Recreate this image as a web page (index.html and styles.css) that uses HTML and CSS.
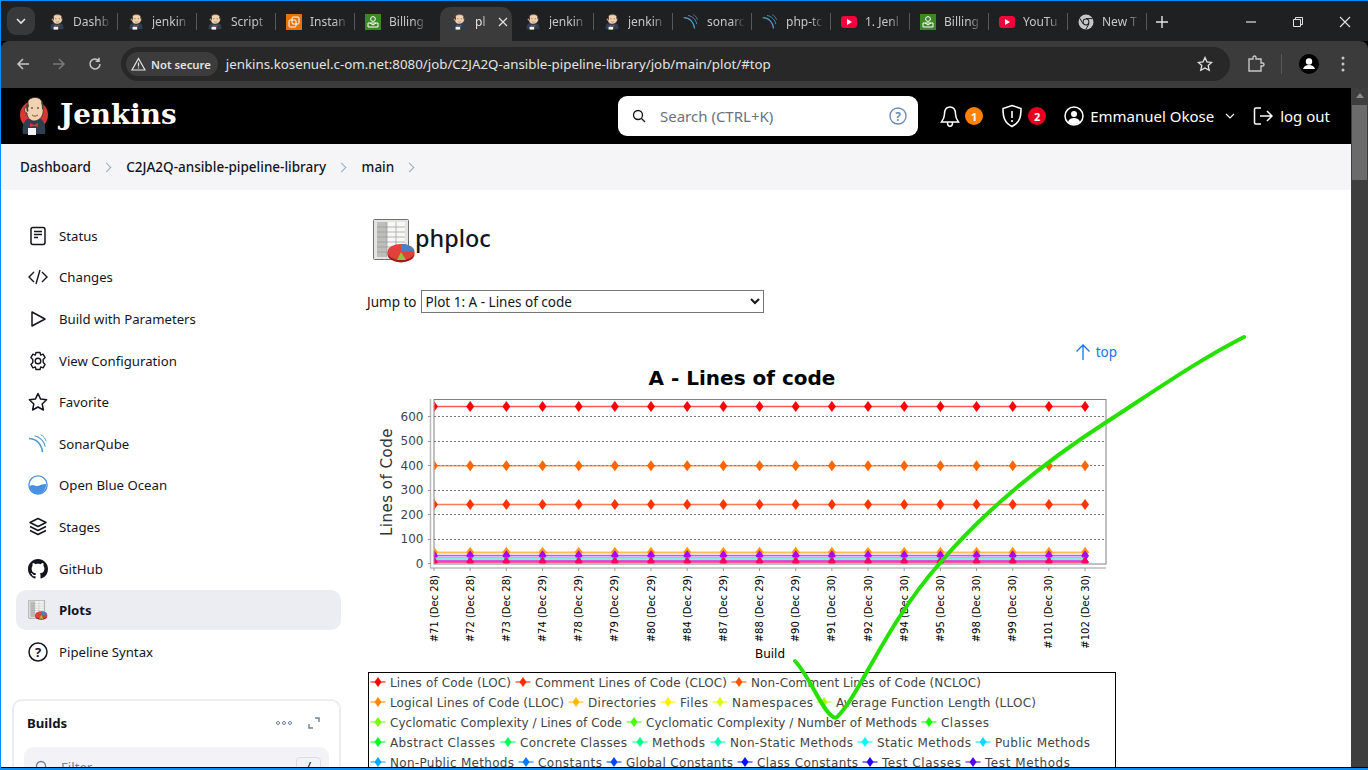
FILE: index.html
```html
<!doctype html>
<html lang="en">
<head>
    <meta charset="utf-8">
    <title>phploc - Jenkins</title>
    <link rel="stylesheet" href="styles.css">
</head>

<body>
    <!-- shared icons -->
    <svg class="defs" width="0" height="0">
        <symbol id="jenkins" viewBox="0 0 28 40" preserveAspectRatio="none">
            <path d="M3 38c-1-6 0-12 4-15l14 0c4 3 5 9 4 15z" fill="#2f3f52"/>
            <path d="M8 5C10 1 18 0 21 4c2 3 3 9 2 13-1 5-5 8-9 8-4 0-7-4-7-8-2 0-3-3-2-5 1-1 2-1 3-1z" fill="#f0d2b0" stroke="#3a2a22" stroke-width=".8"/>
            <path d="M7 8c-1 2-1 5 0 8l1.500-1c-.5-2-.5-4 .5-6zM22 6c1 2 1.500 5 1 8l-1-1c0-2 0-4-1-6z" fill="#4a3a32"/>
            <path d="M11 12h2M17 12h2" stroke="#2a201c" stroke-width="1.200"/>
            <path d="M12 19c2 1.500 4 1.500 6 0" fill="none" stroke="#8a4a3a" stroke-width="1"/>
            <path d="M10 27l4 2 4-2v4l-4-1-4 1z" fill="#d33833"/>
            <rect x="8" y="32" width="8" height="7" fill="#f4f4f4"/>
        </symbol>
        <symbol id="billing" viewBox="0 0 16 16">
            <rect width="16" height="16" fill="#3f8624"/>
            <circle cx="8" cy="5" r="2.4" fill="none" stroke="#fff" stroke-width="1"/>
            <path d="M3 9h10v4H3zM5 9l3 2 3-2" fill="none" stroke="#fff" stroke-width="1"/>
        </symbol>
        <symbol id="aws" viewBox="0 0 16 16">
            <rect width="16" height="16" fill="#e8710a"/>
            <rect x="6" y="3" width="7" height="7" rx="1" fill="none" stroke="#fff" stroke-width="1"/>
            <rect x="3" y="6" width="7" height="7" rx="1" fill="none" stroke="#fff" stroke-width="1"/>
        </symbol>
        <symbol id="sonar" viewBox="0 0 22 22">
            <path d="M1 5c8 0 14 6 15 15" fill="none" stroke="currentColor" stroke-width="1.8"/>
            <path d="M7 2c6 1 11 6 12 12" fill="none" stroke="currentColor" stroke-width="1.2"/>
            <path d="M14 1c3 1 5 4 6 7" fill="none" stroke="currentColor" stroke-width="1"/>
        </symbol>
        <symbol id="youtube" viewBox="0 0 16 16">
            <rect y="2" width="16" height="12" rx="3" fill="#f1003c"/>
            <path d="M6 5l5 3-5 3z" fill="#fff"/>
        </symbol>
        <symbol id="chromelogo" viewBox="0 0 16 16">
            <circle cx="8" cy="8" r="7.5" fill="#c4c7c5"/>
            <circle cx="8" cy="8" r="3.4" fill="#1f2022"/>
            <circle cx="8" cy="8" r="2.4" fill="#c4c7c5"/>
            <path d="M8 4.6h6.5M5 9.8L1.8 4.2M11 9.8L7.8 15.4" stroke="#1f2022" stroke-width="1"/>
        </symbol>
        <symbol id="plot" viewBox="0 0 42 44">
            <rect x=".5" y=".5" width="35" height="40" rx="1" fill="#e4e4e2" stroke="#6f6f6f"/>
            <rect x="4" y="3" width="28" height="35" fill="#f7f7f5"/>
            <rect x="4" y="3" width="10" height="35" fill="#bdbdbb"/>
            <path d="M4 8h28M4 13h28M4 18h28M4 23h28M4 28h28M4 33h28M14 3v35M23 3v35" stroke="#9a9a98" stroke-width=".7"/>
            <ellipse cx="28" cy="35" rx="13.5" ry="8.5" fill="#9e1c1c"/>
            <ellipse cx="28" cy="33" rx="13.5" ry="8" fill="#e2403c"/>
            <path d="M28 33V25c7 0 12 2 13 7z" fill="#4a7fc0"/>
            <path d="M28 33l-4 8h9z" fill="#8cc63f"/>
        </symbol>
    </svg>

    <div class="screen">
        <div class="tabstrip">
            <button class="tab-search">
                <svg width="12" height="12" viewBox="0 0 12 12"><path d="M2 4l4 4 4-4" fill="none" stroke="#e3e3e3" stroke-width="1.6"/></svg>
            </button>
            <div class="tabs">
                <div class="tab"><svg class="favicon"><use href="#jenkins"/></svg><span class="tab-title">Dashb</span></div>
                <div class="tab"><svg class="favicon"><use href="#jenkins"/></svg><span class="tab-title">jenkin</span></div>
                <div class="tab"><svg class="favicon"><use href="#jenkins"/></svg><span class="tab-title">Script</span></div>
                <div class="tab"><svg class="favicon"><use href="#aws"/></svg><span class="tab-title">Instan</span></div>
                <div class="tab no-sep"><svg class="favicon"><use href="#billing"/></svg><span class="tab-title">Billing</span></div>
                <div class="tab tab-active"><svg class="favicon"><use href="#jenkins"/></svg><span class="tab-title">pl</span>
                    <svg class="tab-close" width="10" height="10" viewBox="0 0 10 10"><path d="M1 1l8 8M9 1L1 9" stroke="#e3e3e3" stroke-width="1.2"/></svg>
                </div>
                <div class="tab"><svg class="favicon"><use href="#jenkins"/></svg><span class="tab-title">jenkin</span></div>
                <div class="tab"><svg class="favicon"><use href="#jenkins"/></svg><span class="tab-title">jenkin</span></div>
                <div class="tab"><svg class="favicon sonar-fav"><use href="#sonar"/></svg><span class="tab-title">sonarc</span></div>
                <div class="tab"><svg class="favicon sonar-fav"><use href="#sonar"/></svg><span class="tab-title">php-tc</span></div>
                <div class="tab"><svg class="favicon"><use href="#youtube"/></svg><span class="tab-title">1. Jenl</span></div>
                <div class="tab"><svg class="favicon"><use href="#billing"/></svg><span class="tab-title">Billing</span></div>
                <div class="tab"><svg class="favicon"><use href="#youtube"/></svg><span class="tab-title">YouTu</span></div>
                <div class="tab"><svg class="favicon"><use href="#chromelogo"/></svg><span class="tab-title">New T</span></div>
            </div>
            <svg class="tab-new" width="12" height="12" viewBox="0 0 12 12"><path d="M6 0v12M0 6h12" stroke="#e3e3e3" stroke-width="1.4"/></svg>
            <div class="window-btns">
                <svg width="12" height="12" viewBox="0 0 12 12"><path d="M1 6h10" stroke="#e3e3e3" stroke-width="1.2"/></svg>
                <svg width="12" height="12" viewBox="0 0 12 12"><path d="M1.5 3.5h7v7h-7zM3.5 3.5V1.5h7v7h-2" fill="none" stroke="#e3e3e3"/></svg>
                <svg width="12" height="12" viewBox="0 0 12 12"><path d="M1 1l10 10M11 1L1 11" stroke="#e3e3e3" stroke-width="1.1"/></svg>
            </div>
        </div>

        <div class="toolbar">
            <svg class="nav-icon" width="14" height="14" viewBox="0 0 14 14"><path d="M13 7H2M7 2L2 7l5 5" fill="none" stroke="#c7c7c7" stroke-width="1.5"/></svg>
            <svg class="nav-icon" width="14" height="14" viewBox="0 0 14 14"><path d="M1 7h11M7 2l5 5-5 5" fill="none" stroke="#787878" stroke-width="1.5"/></svg>
            <svg class="nav-icon" width="14" height="14" viewBox="0 0 14 14"><path d="M12 7a5 5 0 1 1-1.5-3.6M11 .8v3.4H7.6" fill="none" stroke="#c7c7c7" stroke-width="1.5"/></svg>
            <div class="omnibox">
                <div class="chip">
                    <svg width="15" height="14" viewBox="0 0 15 14"><path d="M7.5 1.5L14 13H1zM7.5 5.5v4M7.5 10.5v1" fill="none" stroke="#e3e3e3" stroke-width="1.2"/></svg>
                    <span>Not secure</span>
                </div>
                <span class="url">jenkins.kosenuel.c-om.net:8080/job/C2JA2Q-ansible-pipeline-library/job/main/plot/#top</span>
                <svg class="url-star" width="16" height="16" viewBox="0 0 16 16"><path d="M8 1.500l2 4.400 4.700.5-3.500 3.200 1 4.700L8 11.900l-4.200 2.400 1-4.700L1.300 6.400 6 5.900z" fill="none" stroke="#e3e3e3" stroke-width="1.300"/></svg>
            </div>
            <svg class="ext-icon" width="18" height="18" viewBox="0 0 18 18"><path d="M2 4h4V2.500a1.500 1.500 0 0 1 3 0V4h5v4h1.500a1.500 1.500 0 0 1 0 3H14v5H2z" fill="none" stroke="#c7c7c7" stroke-width="1.400"/></svg>
            <span class="toolbar-sep"></span>
            <span class="avatar">
                <svg width="20" height="20" viewBox="0 0 20 20"><circle cx="10" cy="10" r="10" fill="#000"/><circle cx="10" cy="7.500" r="3.200" fill="#fff"/><path d="M4 15c1-3 3-4 6-4s5 1 6 4z" fill="#fff"/></svg>
            </span>
            <svg class="kebab" width="4" height="16" viewBox="0 0 4 16"><circle cx="2" cy="2" r="1.500" fill="#c7c7c7"/><circle cx="2" cy="8" r="1.500" fill="#c7c7c7"/><circle cx="2" cy="14" r="1.500" fill="#c7c7c7"/></svg>
        </div>

        <div class="viewport">
            <div class="page">
                <header class="jk-header">
                    <div class="jk-brand">
                        <span class="jk-logo">
                            <span class="jk-logo-disc"></span>
                            <svg width="28" height="40"><use href="#jenkins"/></svg>
                        </span>
                        <span class="jk-name">Jenkins</span>
                    </div>
                    <div class="jk-search">
                        <svg width="14" height="14" viewBox="0 0 14 14"><circle cx="6" cy="6" r="4.500" fill="none" stroke="#14141f" stroke-width="1.300"/><path d="M9.500 9.500L13 13" stroke="#14141f" stroke-width="1.300"/></svg>
                        <span class="jk-search-text">Search (CTRL+K)</span>
                        <svg class="jk-search-help" width="18" height="18" viewBox="0 0 18 18"><circle cx="9" cy="9" r="8" fill="none" stroke="#6d8db5" stroke-width="1.400"/><text x="9" y="13.500" text-anchor="middle" class="help-q">?</text></svg>
                    </div>
                    <div class="jk-actions">
                        <span class="jk-action">
                            <svg width="20" height="23" viewBox="0 0 20 23"><path d="M10 2c-4 0-5.500 3-5.500 7 0 4-1.500 6-3 8h17c-1.500-2-3-4-3-8 0-4-1.500-7-5.500-7zM7.500 17.500c0 5 5 5 5 0" fill="none" stroke="#fff" stroke-width="1.500"/></svg>
                            <span class="jk-badge jk-badge-orange">1</span>
                        </span>
                        <span class="jk-action">
                            <svg width="22" height="24" viewBox="0 0 22 24"><path d="M11 1.500l9 3c0 8-1 14-9 18-8-4-9-10-9-18zM11 7v7M11 16v2" fill="none" stroke="#fff" stroke-width="1.600"/></svg>
                            <span class="jk-badge jk-badge-red">2</span>
                        </span>
                        <span class="jk-user">
                            <svg width="20" height="20" viewBox="0 0 20 20"><circle cx="10" cy="10" r="9" fill="none" stroke="#fff" stroke-width="1.500"/><circle cx="10" cy="8" r="3" fill="#fff"/><path d="M4 16c1-3 3-4 6-4s5 1 6 4c-3 3-9 3-12 0z" fill="#fff"/></svg>
                            <span>Emmanuel Okose</span>
                            <svg class="jk-caret" width="10" height="6" viewBox="0 0 10 6"><path d="M1 1l4 4 4-4" fill="none" stroke="#fff" stroke-width="1.200"/></svg>
                        </span>
                        <span class="jk-logout">
                            <svg width="20" height="20" viewBox="0 0 20 20"><path d="M8 2H3a1.500 1.500 0 0 0-1.500 1.500v13A1.500 1.500 0 0 0 3 18h5M7 10h12M14 5l5 5-5 5" fill="none" stroke="#fff" stroke-width="1.500"/></svg>
                            <span>log out</span>
                        </span>
                    </div>
                </header>

                <nav class="crumbs">
                    <span>Dashboard</span><i class="crumb-sep"></i>
                    <span>C2JA2Q-ansible-pipeline-library</span><i class="crumb-sep"></i>
                    <span>main</span><i class="crumb-sep"></i>
                </nav>

                <div class="layout">
                    <aside class="sidebar">
                        <ul class="side-list">
                            <li class="side-item">
                                <svg class="side-icon" viewBox="0 0 20 20"><rect x="3" y="1.500" width="14" height="17" rx="2" fill="none" stroke="#14141f" stroke-width="1.500"/><path d="M6 5.500h8M6 8.500h8M6 11.500h4" stroke="#14141f" stroke-width="1.400"/></svg>
                                <span>Status</span>
                            </li>
                            <li class="side-item">
                                <svg class="side-icon" viewBox="0 0 20 20"><path d="M6 5l-5 5 5 5M14 5l5 5-5 5M12 3L8 17" fill="none" stroke="#14141f" stroke-width="1.400"/></svg>
                                <span>Changes</span>
                            </li>
                            <li class="side-item">
                                <svg class="side-icon" viewBox="0 0 20 20"><path d="M4 3v14l13-7z" fill="none" stroke="#14141f" stroke-width="1.500" stroke-linejoin="round"/></svg>
                                <span>Build with Parameters</span>
                            </li>
                            <li class="side-item">
                                <svg class="side-icon" viewBox="0 0 20 20"><path d="M8 1.500h4l.7 2.600 2.400-.9 2 3.400-1.900 1.900v3l1.900 1.900-2 3.400-2.400-.9-.7 2.600H8l-.7-2.600-2.400.9-2-3.400 1.900-1.900v-3L2.900 6.600l2-3.400 2.400.9z" fill="none" stroke="#14141f" stroke-width="1.400" stroke-linejoin="round"/><circle cx="10" cy="10" r="2.800" fill="none" stroke="#14141f" stroke-width="1.400"/></svg>
                                <span>View Configuration</span>
                            </li>
                            <li class="side-item">
                                <svg class="side-icon" viewBox="0 0 20 20"><path d="M10 1.500l2.600 5.600 6 .7-4.400 4.200 1.200 6L10 15l-5.400 3 1.200-6L1.400 7.800l6-.7z" fill="none" stroke="#14141f" stroke-width="1.500" stroke-linejoin="round"/></svg>
                                <span>Favorite</span>
                            </li>
                            <li class="side-item">
                                <svg class="side-icon side-sonar"><use href="#sonar"/></svg>
                                <span>SonarQube</span>
                            </li>
                            <li class="side-item">
                                <svg class="side-icon" viewBox="0 0 22 22"><circle cx="11" cy="11" r="10" fill="#fff" stroke="#4a90e2" stroke-width="1.500"/><path d="M2 12c4-3 6 1 9 0s5-2 9-2c0 6-4 11-9 11S2 17 2 12z" fill="#4a90e2"/></svg>
                                <span>Open Blue Ocean</span>
                            </li>
                            <li class="side-item">
                                <svg class="side-icon" viewBox="0 0 20 20"><path d="M10 1.500l8 4-8 4-8-4zM2 9.500l8 4 8-4M2 13.500l8 4 8-4" fill="none" stroke="#14141f" stroke-width="1.500" stroke-linejoin="round"/></svg>
                                <span>Stages</span>
                            </li>
                            <li class="side-item">
                                <svg class="side-icon" viewBox="0 0 16 16"><path d="M8 0C3.580 0 0 3.580 0 8c0 3.540 2.290 6.530 5.470 7.590.4.070.55-.17.55-.38 0-.19-.01-.82-.01-1.490-2.010.37-2.530-.49-2.690-.94-.09-.23-.48-.94-.82-1.130-.28-.15-.68-.52-.01-.53.63-.01 1.080.58 1.230.82.72 1.210 1.870.87 2.330.66.070-.52.28-.87.51-1.070-1.780-.2-3.640-.89-3.640-3.950 0-.87.31-1.590.82-2.150-.08-.2-.36-1.020.08-2.120 0 0 .67-.21 2.200.82.64-.18 1.320-.27 2-.27.68 0 1.360.09 2 .27 1.530-1.040 2.200-.82 2.200-.82.44 1.100.16 1.920.08 2.120.51.56.82 1.270.82 2.150 0 3.070-1.870 3.750-3.650 3.950.29.25.54.73.54 1.480 0 1.070-.01 1.930-.01 2.200 0 .21.15.46.55.38A8.013 8.013 0 0 0 16 8c0-4.420-3.580-8-8-8z" fill="#14141f"/></svg>
                                <span>GitHub</span>
                            </li>
                            <li class="side-item side-item-active">
                                <svg class="side-icon"><use href="#plot"/></svg>
                                <span>Plots</span>
                            </li>
                            <li class="side-item">
                                <svg class="side-icon" viewBox="0 0 20 20"><circle cx="10" cy="10" r="9" fill="none" stroke="#14141f" stroke-width="1.500"/><text x="10" y="14.500" text-anchor="middle" class="side-q">?</text></svg>
                                <span>Pipeline Syntax</span>
                            </li>
                        </ul>

                        <section class="builds">
                            <div class="builds-head">
                                <span class="builds-title">Builds</span>
                                <svg class="builds-dots" width="16" height="4" viewBox="0 0 16 4"><circle cx="2" cy="2" r="1.500" fill="none" stroke="#6d7f9c"/><circle cx="8" cy="2" r="1.500" fill="none" stroke="#6d7f9c"/><circle cx="14" cy="2" r="1.500" fill="none" stroke="#6d7f9c"/></svg>
                                <svg width="12" height="12" viewBox="0 0 12 12"><path d="M7 1h4v4M5 11H1V7" fill="none" stroke="#6d7f9c" stroke-width="1.400"/></svg>
                            </div>
                            <div class="builds-filter">
                                <svg width="14" height="14" viewBox="0 0 14 14"><circle cx="6" cy="6" r="4.500" fill="none" stroke="#6d7f9c" stroke-width="1.300"/><path d="M9.500 9.500L13 13" stroke="#6d7f9c" stroke-width="1.300"/></svg>
                                <span class="builds-filter-text">Filter</span>
                                <kbd class="builds-key">/</kbd>
                            </div>
                        </section>
                    </aside>

                    <main class="content">
                        <div class="plot-head">
                            <svg class="plot-icon"><use href="#plot"/></svg>
                            <h1>phploc</h1>
                        </div>
                        <div class="jump">
                            <label for="jump-select">Jump to</label>
                            <select id="jump-select">
                                <option>Plot 1: A - Lines of code</option>
                            </select>
                        </div>
                        <div class="top-row">
                            <a class="top-link" href="#top">
                                <svg width="16" height="16" viewBox="0 0 16 16"><path d="M8 16V1M1.500 7.500L8 1l6.500 6.500" fill="none" stroke="#1a73e8" stroke-width="1.300"/></svg>
                                <span>top</span>
                            </a>
                        </div>
                        <svg id="chart" class="chart" viewBox="367 362 750 420"></svg>
                    </main>
                </div>
            </div>

            <div class="scrollbar">
                <span class="scroll-arrow"></span>
                <span class="scroll-thumb"></span>
            </div>
        </div>

        <!-- hand drawn mark on top of the screenshot -->
        <svg class="annotation" width="1368" height="770" viewBox="0 0 1368 770">
            <path d="M795 661C810 677 822 710 832 716 834 718 836 718 837 717 860 695 885 625 940 563 985 510 1040 465 1105 423 1150 394 1195 362 1244 337" fill="none" stroke="#25e000" stroke-width="4" stroke-linecap="round" stroke-linejoin="round"/>
        </svg>
    </div>

    <script src="chart.js"></script>
</body>

</html>
```

FILE: styles.css
```css
* {
    box-sizing: border-box;
}

html,
body {
    margin: 0;
    height: 100%;
    overflow: hidden;
    background: #000;
}

.defs {
    position: absolute;
}

.screen {
    position: relative;
    display: flex;
    flex-direction: column;
    width: 1368px;
    height: 770px;
    overflow: hidden;
    border-top: 1px solid #0a8cf5;
    border-left: 1px solid #0a8cf5;
    border-bottom: 2px solid #0a8cf5;
    font-family: "Noto Sans", sans-serif;
}

/* browser chrome */
.tabstrip {
    display: flex;
    align-items: flex-start;
    flex: none;
    height: 40px;
    background: #1f2022;
}

.tab-search {
    display: flex;
    align-items: center;
    justify-content: center;
    width: 28px;
    height: 28px;
    margin: 6px 0 0 6px;
    padding: 0;
    border: 0;
    border-radius: 9px;
    background: #38393b;
}

.tabs {
    display: flex;
    margin: 6px 0 0 4px;
}

.tab {
    position: relative;
    display: flex;
    align-items: center;
    flex: none;
    gap: 8px;
    width: 79px;
    height: 34px;
    padding: 0 0 5px 10px;
    color: #c7c7c7;
    font-size: 12px;
}

.tab::after {
    content: "";
    position: absolute;
    right: 0;
    top: 6px;
    width: 1px;
    height: 17px;
    background: #57585a;
}

.no-sep::after,
.tab-active::after {
    display: none;
}

.tab-active {
    width: 72px;
    margin: 0 3px 0 6px;
    padding-left: 11px;
    border-radius: 10px 10px 0 0;
    background: #3b3b3b;
    color: #e3e3e3;
}

.favicon {
    flex: none;
    width: 16px;
    height: 16px;
}

.sonar-fav {
    color: #4e9bcd;
}

.tab-title {
    width: 38px;
    overflow: hidden;
    white-space: nowrap;
    -webkit-mask-image: linear-gradient(to right, #000 65%, transparent);
    mask-image: linear-gradient(to right, #000 65%, transparent);
}

.tab-active .tab-title {
    width: 12px;
}

.tab-close {
    margin-left: 3px;
}

.tab-new {
    margin: 15px 0 0 9px;
}

.window-btns {
    display: flex;
    gap: 35px;
    margin: 15px 17px 0 auto;
}

.toolbar {
    display: flex;
    align-items: center;
    flex: none;
    height: 47px;
    padding: 0 0 1px 15px;
    border-radius: 8px 8px 0 0;
    background: #3b3b3b;
}

.nav-icon {
    margin-right: 22px;
}

.nav-icon:nth-child(3) {
    margin-right: 19px;
}

.omnibox {
    display: flex;
    align-items: center;
    width: 1109px;
    height: 34px;
    padding: 0 17px 0 5px;
    border-radius: 17px;
    background: #282828;
}

.chip {
    display: flex;
    align-items: center;
    gap: 5px;
    height: 24px;
    padding: 0 7px 0 5px;
    border-radius: 12px;
    background: #3c3c3c;
    color: #e3e3e3;
    font-size: 11.300px;
    font-weight: 600;
    white-space: nowrap;
}

.url {
    margin-left: 8px;
    color: #e3e3e3;
    font-size: 13.300px;
    white-space: nowrap;
}

.url-star {
    margin-left: auto;
}

.ext-icon {
    margin-left: 17px;
}

.toolbar-sep {
    width: 1px;
    height: 20px;
    margin-left: 16px;
    background: #5b5b5b;
}

.avatar {
    display: flex;
    margin-left: 17px;
}

.kebab {
    margin-left: 22px;
}

/* jenkins page */
.viewport {
    display: flex;
    flex: 1;
    min-height: 0;
    border-bottom: 1px solid #000;
}

.page {
    flex: 1;
    min-width: 0;
    overflow: hidden;
    background: #fff;
    color: #14141f;
    font-size: 14px;
}

.scrollbar {
    display: flex;
    flex-direction: column;
    align-items: center;
    flex: none;
    width: 17px;
    padding-top: 5px;
    background: #3e3e3e;
}

.scroll-arrow {
    width: 0;
    height: 0;
    border-left: 4px solid transparent;
    border-right: 4px solid transparent;
    border-bottom: 5px solid #8a8a8a;
}

.scroll-thumb {
    width: 15px;
    height: 75px;
    margin-top: 7px;
    background: #6b6b6b;
}

.jk-header {
    display: flex;
    align-items: center;
    height: 56px;
    padding: 0 21px 0 19px;
    background: #000;
    color: #fff;
}

.jk-brand {
    display: flex;
    align-items: center;
    gap: 12px;
    width: 598px;
}

.jk-logo {
    position: relative;
    display: block;
    width: 28px;
    height: 40px;
}

.jk-logo svg {
    position: relative;
}

.jk-logo-disc {
    position: absolute;
    left: 0;
    top: 5px;
    width: 28px;
    height: 28px;
    border-radius: 50%;
    background: #d33833;
}

.jk-name {
    margin-top: -4px;
    font-family: "DejaVu Serif", serif;
    font-size: 27.800px;
    font-weight: 700;
}

.jk-search {
    display: flex;
    align-items: center;
    width: 300px;
    height: 40px;
    padding: 0 11px 0 14px;
    border-radius: 9px;
    background: #fff;
    color: #14141f;
}

.jk-search-text {
    margin-left: 14px;
    color: #6b7280;
    font-size: 15px;
}

.jk-search-help {
    margin-left: auto;
}

.help-q {
    fill: #6d8db5;
    font: 700 12px "Noto Sans", sans-serif;
}

.jk-actions {
    display: flex;
    align-items: center;
    margin-left: auto;
}

.jk-action {
    display: flex;
    align-items: center;
    gap: 5px;
    margin-right: 18px;
}

.jk-badge {
    display: flex;
    align-items: center;
    justify-content: center;
    width: 18px;
    height: 18px;
    border-radius: 50%;
    color: #fff;
    font-size: 11px;
    font-weight: 700;
}

.jk-badge-orange {
    background: #fe820a;
}

.jk-badge-red {
    background: #e6001f;
}

.jk-user,
.jk-logout {
    display: flex;
    align-items: center;
    gap: 6px;
    font-size: 15px;
}

.jk-caret {
    margin: 0 0 0 5px;
}

.jk-logout {
    gap: 7px;
    margin-left: 18px;
}

.crumbs {
    display: flex;
    align-items: center;
    height: 46px;
    padding-left: 19px;
    background: #f5f5f8;
    font-size: 13.500px;
    font-weight: 500;
}

.crumb-sep {
    width: 7px;
    height: 7px;
    margin: 0 16.500px 0 12px;
    border-top: 1.500px solid #9aa8c0;
    border-right: 1.500px solid #9aa8c0;
    transform: rotate(45deg);
}

.layout {
    display: flex;
}

.sidebar {
    flex: none;
    width: 366px;
    padding: 25.800px 0 0 11px;
}

.side-list {
    display: flex;
    flex-direction: column;
    gap: 1.600px;
    width: 329px;
    margin: 0;
    padding: 0 0 0 4px;
    list-style: none;
}

.side-item {
    display: flex;
    align-items: center;
    gap: 11px;
    height: 40px;
    padding-left: 12px;
    border-radius: 10px;
    font-size: 13.200px;
}

.side-item-active {
    background: #ecedf2;
    font-weight: 700;
}

.side-icon {
    flex: none;
    width: 20px;
    height: 20px;
}

.side-sonar {
    color: #4e9bcd;
}

.side-q {
    fill: #14141f;
    font: 700 13px "Noto Sans", sans-serif;
}

.builds {
    width: 329px;
    height: 90px;
    margin-top: 27.200px;
    padding: 13px 10px 0;
    border: 2px solid #ecedf2;
    border-radius: 10px;
}

.builds-head {
    display: flex;
    align-items: center;
    padding: 0 9px 0 3px;
}

.builds-title {
    font-size: 13.200px;
    font-weight: 700;
}

.builds-dots {
    margin: 0 16px 0 auto;
}

.builds-filter {
    display: flex;
    align-items: center;
    gap: 12px;
    height: 40px;
    margin-top: 15px;
    padding: 0 8px 0 11px;
    border-radius: 9px;
    background: #f3f3f7;
}

.builds-filter-text {
    color: #6d7f9c;
    font-size: 13.200px;
}

.builds-key {
    margin-left: auto;
    padding: 2px 8px;
    border: 1px solid #dcdce4;
    border-radius: 4px;
    font-size: 12px;
}

.content {
    flex: 1;
    min-width: 0;
    padding-top: 27px;
}

.plot-head {
    display: flex;
    align-items: center;
    height: 48px;
    padding-left: 6px;
}

.plot-icon {
    width: 42px;
    height: 44px;
}

.plot-head h1 {
    margin: -6px 0 0;
    font-size: 23.400px;
    font-weight: 500;
}

.jump {
    display: flex;
    align-items: center;
    gap: 4px;
    margin-top: 25px;
    font-size: 13.500px;
}

.jump select {
    width: 343px;
    height: 23px;
    padding: 0;
    border: 1px solid #767676;
    border-radius: 0;
    background: #fff;
    color: #14141f;
    font: 13.500px "Noto Sans", sans-serif;
}

.top-row {
    display: flex;
    justify-content: flex-end;
    width: 750px;
    margin-top: 30px;
}

.top-link {
    display: flex;
    align-items: center;
    gap: 5px;
    color: #1a73e8;
    font-size: 13.500px;
    text-decoration: none;
}

.chart {
    display: block;
    width: 750px;
    height: 420px;
    margin-top: 1px;
    font-family: "DejaVu Sans", sans-serif;
}

.chart-title {
    font-size: 20px;
    font-weight: 700;
}

.axis-num {
    fill: #444;
    font-size: 12px;
}

.axis-name {
    fill: #333;
    font-size: 15px;
    letter-spacing: .5px;
}

.x-label {
    font-size: 10px;
}

.x-name {
    font-size: 12px;
}

.legend-text {
    fill: #444;
    font-size: 12px;
}

.annotation {
    position: absolute;
    left: -1px;
    top: -1px;
    pointer-events: none;
}
```

FILE: chart.js
```js
// phploc chart, coordinates are the same as the page (see viewBox)
var svg = document.getElementById("chart");
var NS = "http://www.w3.org/2000/svg";
var target = svg;

function add(tag, attrs, text) {
    var el = document.createElementNS(NS, tag);
    for (var k in attrs) el.setAttribute(k, attrs[k]);
    if (text) el.textContent = text;
    target.appendChild(el);
    return el;
}

function diamond(x, y, rx, ry, color) {
    add("path", {
        d: "M" + x + " " + (y - ry) + "L" + (x + rx) + " " + y + "L" + x + " " + (y + ry) + "L" + (x - rx) + " " + y + "Z",
        fill: color
    });
}

var builds = [
    ["71", 28], ["72", 28], ["73", 28], ["74", 29], ["78", 29], ["79", 29], ["80", 29],
    ["84", 29], ["87", 29], ["88", 29], ["90", 29], ["91", 30], ["92", 30], ["94", 30],
    ["95", 30], ["98", 30], ["99", 30], ["101", 30], ["102", 30]
];

function bx(i) { return 434 + i * 36.17; }
function vy(v) { return 563.3 - v * 0.245; }

add("text", { x: 742, y: 385, "text-anchor": "middle", "class": "chart-title" }, "A - Lines of code");

// frame and axes
add("rect", { x: 434, y: 399.5, width: 672, height: 164.5, fill: "#fff", stroke: "#808080" });
add("path", { d: "M430.5 399V568", stroke: "#bbb", "stroke-width": 1.5 });
add("path", { d: "M430 568H1106", stroke: "#bbb", "stroke-width": 1.5 });

[100, 200, 300, 400, 500, 600].forEach(function (v) {
    var y = Math.round(vy(v)) + 0.5;
    add("path", { d: "M434 " + y + "H1106", stroke: "#777", "stroke-dasharray": "2 2" });
});
[0, 100, 200, 300, 400, 500, 600].forEach(function (v) {
    add("text", { x: 423.5, y: vy(v) + 4.5, "text-anchor": "end", "class": "axis-num" }, String(v));
    add("path", { d: "M428 " + (Math.round(vy(v)) + 0.5) + "H431", stroke: "#999" });
});
add("text", { transform: "translate(392 482) rotate(-90)", "text-anchor": "middle", "class": "axis-name" }, "Lines of Code");

// series, clipped to the plot box
var clip = add("clipPath", { id: "plot-area" });
target = clip;
add("rect", { x: 434.5, y: 400, width: 671, height: 163.5 });
target = svg;
target = add("g", { "clip-path": "url(#plot-area)" });

var series = [
    [640, "#ff0000", true], [240, "#ff3300", true], [398, "#ff6600", true], [45, "#ff9900", true], [38, "#e0a0ff", false],
    [31, "#aa00ff", true], [22, "#00ff66", false], [16, "#66ccff", false], [10, "#cc00cc", false], [5, "#ff0066", true]
];
series.forEach(function (s) {
    var y = vy(s[0]);
    add("path", { d: "M434 " + y + "H" + bx(18), stroke: s[1], "stroke-opacity": 0.65, "stroke-width": 1.6 });
    if (!s[2]) return;
    builds.forEach(function (b, i) {
        diamond(bx(i), y, 4, 5.5, s[1]);
    });
});
target = svg;

builds.forEach(function (b, i) {
    var x = bx(i);
    add("path", { d: "M" + x + " 568V571", stroke: "#999" });
    add("text", {
        transform: "translate(" + (x + 3.5) + " 575) rotate(-90)",
        "text-anchor": "end",
        "class": "x-label"
    }, "#" + b[0] + " (Dec " + b[1] + ")");
});
add("text", { x: 770, y: 658, "text-anchor": "middle", "class": "x-name" }, "Build");

// legend: [x, label, color, width of the label]
add("rect", { x: 368.5, y: 672.5, width: 747, height: 120, fill: "#fff", stroke: "#000" });
var legend = [
    [682, [[390, "Lines of Code (LOC)", "#ff0000", 121], [535, "Comment Lines of Code (CLOC)", "#ff2a00", 192], [751, "Non-Comment Lines of Code (NCLOC)", "#ff5500", 230]]],
    [702, [[390, "Logical Lines of Code (LLOC)", "#ff8800", 174], [588, "Directories", "#ffbb00", 68], [680, "Files", "#ffee00", 28], [732, "Namespaces", "#ddff00", 81], [836, "Average Function Length (LLOC)", "#aaff00", 200]]],
    [722, [[390, "Cyclomatic Complexity / Lines of Code", "#77ff00", 232], [646, "Cyclomatic Complexity / Number of Methods", "#44ff00", 271], [941, "Classes", "#11ff00", 48]]],
    [742, [[390, "Abstract Classes", "#00ff22", 105], [520, "Concrete Classes", "#00ff55", 107], [652, "Methods", "#00ff88", 53], [730, "Non-Static Methods", "#00ffbb", 123], [877, "Static Methods", "#00ffee", 94], [995, "Public Methods", "#00ddff", 95]]],
    [762, [[390, "Non-Public Methods", "#00aaff", 124], [538, "Constants", "#0077ff", 64], [626, "Global Constants", "#0044ff", 107], [757, "Class Constants", "#0011ff", 101], [882, "Test Classes", "#2200ff", 79], [985, "Test Methods", "#5500ff", 85]]]
];
legend.forEach(function (row) {
    row[1].forEach(function (item) {
        var mx = item[0] - 12;
        add("path", { d: "M" + (mx - 7.5) + " " + row[0] + "H" + (mx + 7.5), stroke: item[2], "stroke-opacity": 0.7, "stroke-width": 1.5 });
        diamond(mx, row[0], 3.5, 5, item[2]);
        add("text", { x: item[0], y: row[0] + 4.5, textLength: item[3], lengthAdjust: "spacing", "class": "legend-text" }, item[1]);
    });
});
```
